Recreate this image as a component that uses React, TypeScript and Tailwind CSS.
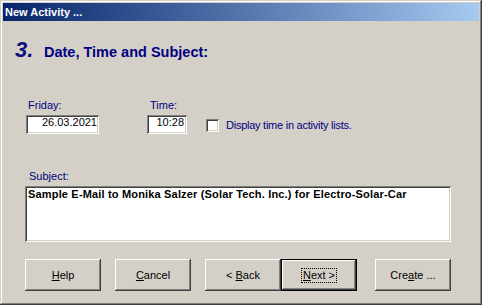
import React from "react";

const raised =
  "shadow-[inset_-1px_-1px_#404040,inset_1px_1px_#ffffff,inset_-2px_-2px_#808080,inset_2px_2px_#d4d0c8]";
const sunken =
  "shadow-[inset_1px_1px_#808080,inset_-1px_-1px_#ffffff,inset_2px_2px_#404040,inset_-2px_-2px_#d4d0c8]";

function Btn({ children, def = false, className = "" }: { children: React.ReactNode; def?: boolean; className?: string }) {
  return (
    <div
      className={
        "w-[76px] h-[32px] flex items-center justify-center text-[11px] leading-[13px] text-black bg-[#d4d0c8] " +
        (def
          ? "shadow-[inset_0_0_0_1px_#000000,inset_-2px_-2px_#404040,inset_2px_2px_#ffffff,inset_-3px_-3px_#808080] "
          : raised + " ") +
        className
      }
    >
      {children}
    </div>
  );
}

export default function App() {
  return (
    <div
      className="w-[482px] h-[305px] bg-[#d4d0c8] p-[3px] flex flex-col shadow-[inset_-1px_-1px_#404040,inset_1px_1px_#d4d0c8,inset_-2px_-2px_#808080,inset_2px_2px_#ffffff]"
      style={{ fontFamily: '"Liberation Sans", Arial, sans-serif' }}
    >
      <div className="h-[18px] flex items-center pl-[2px] bg-gradient-to-r from-[#0a246a] to-[#a6caf0]">
        <span className="text-white font-bold text-[11px] leading-[13px]">New Activity ...</span>
      </div>
      <div className="flex-1 flex flex-col pl-[22px]">
        <div className="mt-[19px] h-[20px] -ml-[10px] flex items-baseline text-[#000080]">
          <span className="w-[29px] font-bold italic text-[22px] leading-[20px] text-[#10107e]">3.</span>
          <span className="font-bold text-[14.5px] leading-[20px]">Date, Time and Subject:</span>
        </div>

        <div className="mt-[39px] ml-[1px] flex">
          <div className="w-[121px] flex flex-col">
            <span className="pl-[2px] text-[11px] leading-[13px] text-[#000080]">Friday:</span>
            <div className={"mt-[3px] w-[73px] h-[19px] bg-white pt-[1px] pr-[2px] text-right text-[11px] leading-[13px] text-black " + sunken}>
              26.03.2021
            </div>
          </div>
          <div className="w-[59px] flex flex-col">
            <span className="pl-[3px] text-[11px] leading-[13px] text-[#000080]">Time:</span>
            <div className={"mt-[3px] w-[40px] h-[19px] bg-white pt-[1px] pr-[3px] text-right text-[11px] leading-[13px] text-black " + sunken}>
              10:28
            </div>
          </div>
          <div className="pt-[20px] flex items-center self-start">
            <div className={"w-[13px] h-[13px] bg-white " + sunken}></div>
            <span className="ml-[7px] text-[11px] leading-[13px] text-[#000080] tracking-[-0.25px]">
              Display time in activity lists.
            </span>
          </div>
        </div>

        <span className="mt-[36px] pl-[4px] text-[11px] leading-[13px] text-[#000080]">Subject:</span>
        <div className={"mt-[3px] w-[426px] h-[56px] bg-white pt-[2px] pl-[3px] text-[11px] leading-[13px] font-bold tracking-[0.17px] text-black " + sunken}>
          Sample E-Mail to Monika Salzer (Solar Tech. Inc.) for Electro-Solar-Car
        </div>

        <div className="mt-[17px] flex">
          <Btn>
            <span><u>H</u>elp</span>
          </Btn>
          <Btn className="ml-[14px]">
            <span><u>C</u>ancel</span>
          </Btn>
          <Btn className="ml-[14px]">
            <span>&lt; <u>B</u>ack</span>
          </Btn>
          <Btn def>
            <span className="border border-dotted border-black px-[1px]"><u>N</u>ext &gt;</span>
          </Btn>
          <Btn className="ml-[18px]">
            <span>Cre<u>a</u>te ...</span>
          </Btn>
        </div>
      </div>
    </div>
  );
}
